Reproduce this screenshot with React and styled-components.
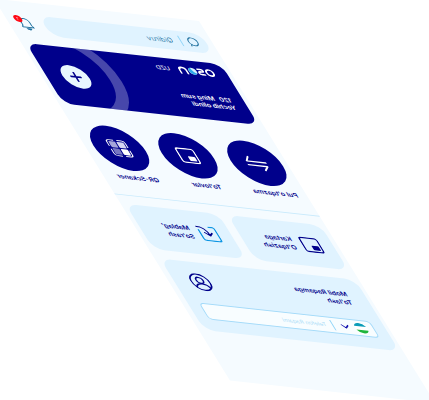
import React from "react";
import styled, { createGlobalStyle } from "styled-components";

const navy = "#00008b";
const ice = "#f5fbff";
const sky = "#e0f3ff";

const GlobalStyle = createGlobalStyle`
  *, *::before, *::after { box-sizing: border-box; }
  body { margin: 0; background: #fff; font-family: Inter, "Liberation Sans", sans-serif; }
  button, input { font: inherit; color: inherit; margin: 0; padding: 0; border: 0; background: none; }
  button { cursor: pointer; }
  svg { display: block; flex: none; }
`;

const Scene = styled.main`
  height: 100vh;
  overflow: hidden;
`;

/* The phone screen lies in space and is seen from behind. */
const Phone = styled.div`
  width: calc(100vw - 54px);
  padding-bottom: 109px;
  background: ${ice};
  color: ${navy};
  transform-origin: 0 0;
  transform: matrix(-0.5467, -0.0596, 0.2906, 0.4704, 199, 21);
`;

const Header = styled.header`
  display: flex;
  align-items: center;
  gap: 22px;
  padding: 28px 21px 0 12px;
`;

const SearchBar = styled.label`
  flex: 1;
  min-width: 0;
  height: 44px;
  padding: 0 14px;
  border-radius: 22px;
  background: ${sky};
  color: #20719f;
  display: flex;
  align-items: center;
`;

const Rule = styled.span`
  width: 2px;
  height: 22px;
  background: #8fd4f8;
  margin: 0 ${(p) => p.$after}px 0 ${(p) => p.$before}px;
  flex: none;
`;

const TextInput = styled.input`
  flex: 1;
  min-width: 0;
  outline: none;
  font-size: ${(p) => p.$size}px;
  &::placeholder { color: ${(p) => p.$tone}; opacity: 1; }
`;

const BellButton = styled.button`
  position: relative;
  width: 24px;
  color: #20719f;
`;

const Badge = styled.span`
  position: absolute;
  top: -3px;
  right: -6px;
  width: 15px;
  height: 15px;
  border-radius: 50%;
  background: #ff0a14;
  color: #fff;
  font-size: 9px;
  line-height: 15px;
  text-align: center;
`;

const BalanceCard = styled.section`
  position: relative;
  overflow: hidden;
  margin: 21px 9px 0;
  padding: 13px 32px 25px 24px;
  border-radius: 20px;
  background: ${navy};
  color: #fff;
  display: flex;
  justify-content: space-between;
  height: 129px;
`;

const Ring = styled.span`
  position: absolute;
  top: -36px;
  right: -59px;
  width: 200px;
  height: 200px;
  border: 21px solid rgba(255, 255, 255, 0.28);
  border-radius: 50%;
`;

const CardInfo = styled.div`
  display: flex;
  flex-direction: column;
  justify-content: space-between;
`;

const Brand = styled.div`
  display: flex;
  align-items: center;
  gap: 16px;
  font-size: 12px;
  line-height: 20px;
`;

const Balance = styled.p`
  margin: 0;
  font-size: 13px;
  font-weight: 600;
  line-height: 16px;
`;

const Amount = styled.span`
  margin-right: 9px;
`;

const PlusButton = styled.button`
  align-self: flex-end;
  width: 50px;
  height: 50px;
  margin-bottom: 14px;
  border-radius: 50%;
  background: #e8f6ff;
  color: ${navy};
  display: grid;
  place-items: center;
`;

const Actions = styled.nav`
  display: flex;
  justify-content: space-between;
  padding: 40px 17px 33px 11px;
  border-bottom: 2px solid #c9eafc;
`;

const Action = styled.button`
  width: 96px;
  display: flex;
  flex-direction: column;
  align-items: center;
  gap: 7px;
  font-size: 13px;
  font-weight: 600;
  line-height: 16px;
  white-space: nowrap;
`;

const Disc = styled.span`
  width: 96px;
  height: 96px;
  border-radius: 50%;
  background: ${navy};
  color: #fff;
  display: grid;
  place-items: center;
`;

const Tiles = styled.div`
  display: grid;
  grid-template-columns: 1fr 1fr;
  gap: 17px;
  padding: 19px 9px 0;
`;

const Tile = styled.button`
  height: 96px;
  padding-left: 24px;
  border-radius: 20px;
  background: ${sky};
  display: flex;
  align-items: center;
  gap: 14px;
  text-align: left;
  font-size: 13px;
  font-weight: 600;
  line-height: 18px;
`;

const Panel = styled.section`
  margin: 20px 11px 0 7px;
  padding: 25px 22px;
  border-radius: 20px;
  background: ${sky};
`;

const PanelHead = styled.div`
  display: flex;
  justify-content: space-between;
  align-items: center;
  padding: 0 10px 0 12px;
  margin-bottom: 28px;
`;

const Title = styled.h2`
  margin: 0;
  font-size: 13px;
  font-weight: 600;
  line-height: 18px;
`;

const PhoneField = styled.div`
  height: 36px;
  padding: 0 11px;
  border: 2px solid #a3daf9;
  border-radius: 8px;
  background: #f8fdff;
  display: flex;
  align-items: center;
`;

const CountryButton = styled.button`
  display: flex;
  align-items: center;
  gap: 10px;
  color: #1616b0;
`;

const SearchIcon = () => (
  <svg width="22" height="22" viewBox="0 0 22 22" fill="none" stroke="currentColor" strokeWidth="2" strokeLinecap="round">
    <circle cx="11" cy="10" r="8.5" />
    <path d="M16.5 16.5l2 3.5" />
  </svg>
);

const BellIcon = () => (
  <svg width="24" height="30" viewBox="0 0 24 30" fill="none" stroke="currentColor" strokeWidth="2" strokeLinecap="round" strokeLinejoin="round">
    <path d="M12 3c-5 0-8 4-8 8v6l-2.5 5h21L20 17v-6c0-4-3-8-8-8z" />
    <path d="M8 25c2 3 6 3 8 0z" fill="currentColor" />
  </svg>
);

const Logo = () => (
  <svg width="66" height="18" viewBox="0 0 66 18" fill="none" stroke="#fff" strokeWidth="3.5" strokeLinecap="round" role="img" aria-label="Oson">
    <ellipse cx="8.5" cy="9" rx="6.5" ry="6.5" />
    <path d="M29 3.5h-5.5c-4.5 0-4.5 5 0 5h2c5 0 5 6 0 6H20" />
    <circle cx="40" cy="9" r="7.5" fill="#d8f2ff" stroke="none" />
    <path d="M34 13.5c4-1 7-4 8-11.5 6 2 7 10 1.5 13.5-3 1.5-7 1-9.5-2z" fill="#2fa8ea" stroke="none" />
    <path d="M51.5 15.5V9c0-8 12.5-8 12.5 0v6.5" />
  </svg>
);

const PlusIcon = () => (
  <svg width="22" height="22" viewBox="0 0 22 22" stroke="currentColor" strokeWidth="3.5" strokeLinecap="round">
    <path d="M11 2v18M2 11h18" />
  </svg>
);

const SwapIcon = () => (
  <svg width="40" height="40" viewBox="0 0 40 40" fill="none" stroke="currentColor" strokeWidth="3" strokeLinecap="round" strokeLinejoin="round">
    <path d="M2 17h35L30 7" />
    <path d="M38 25H3l8 9" />
  </svg>
);

const WalletIcon = () => (
  <svg width="36" height="34" viewBox="0 0 36 34" fill="none" stroke="currentColor" strokeWidth="2.8">
    <rect x="2" y="2" width="32" height="30" rx="4" />
    <rect x="6" y="18" width="13" height="10" rx="1.5" fill="currentColor" stroke="none" />
  </svg>
);

const QrIcon = () => (
  <svg width="40" height="40" viewBox="0 0 40 40" fill="none" stroke="currentColor" strokeWidth="2">
    <rect x="6" y="6" width="13" height="13" rx="2" fill="#d6d6f2" stroke="none" />
    <rect x="21" y="6" width="13" height="13" rx="2" fill="#a6a6da" stroke="none" />
    <rect x="6" y="21" width="13" height="13" rx="2" fill="#fff" stroke="none" />
    <rect x="21" y="21" width="13" height="13" rx="2" fill="#7777c2" stroke="none" />
    <path d="M3 17V8q0-5 5-5h9M23 3h9q5 0 5 5v9M37 23v9q0 5-5 5h-9M17 37H8q-5 0-5-5v-9" />
  </svg>
);

const ReceiveIcon = () => (
  <svg width="36" height="34" viewBox="0 0 36 34" fill="none" strokeWidth="2.8" strokeLinecap="round" strokeLinejoin="round">
    <path d="M12 2H6Q2 2 2 6v22q0 4 4 4h24q4 0 4-4V10" stroke="#0d95e3" />
    <path d="M35 3C25 2 18 8 18 20M12 15l6 6 7-6" stroke={navy} />
  </svg>
);

const UserIcon = () => (
  <svg width="38" height="38" viewBox="0 0 38 38" fill="none" stroke="currentColor" strokeWidth="2.8" strokeLinecap="round">
    <circle cx="19" cy="19" r="17.5" />
    <circle cx="19" cy="15" r="6.5" />
    <path d="M6.5 30.500C10 20 28 20 31.5 30.5" />
  </svg>
);

const FlagIcon = () => (
  <svg width="24" height="24" viewBox="0 0 24 24">
    <circle cx="12" cy="12" r="12" fill="#fff" />
    <path d="M1 8a12 12 0 0 1 22 0z" fill="#0a9cb8" />
    <path d="M1 16a12 12 0 0 0 22 0z" fill="#1fb53c" />
  </svg>
);

const ChevronIcon = () => (
  <svg width="14" height="10" viewBox="0 0 14 10" fill="none" stroke="currentColor" strokeWidth="2.5" strokeLinecap="round">
    <path d="M1 2l6 6 6-6" />
  </svg>
);

const actions = [
  { label: "Pul o'tqazma", icon: <SwapIcon /> },
  { label: "To'lovlar", icon: <WalletIcon /> },
  { label: "QR-Sckaner", icon: <QrIcon /> },
];

export default function App() {
  return (
    <Scene>
      <GlobalStyle />
      <Phone>
        <Header>
          <SearchBar>
            <SearchIcon />
            <Rule $before={11} $after={14} />
            <TextInput type="search" placeholder="Qidiruv" aria-label="Qidiruv" $size={14} $tone="#3b86b0" />
          </SearchBar>
          <BellButton aria-label="Bildirishnomalar">
            <BellIcon />
            <Badge>1</Badge>
          </BellButton>
        </Header>

        <BalanceCard>
          <Ring />
          <CardInfo>
            <Brand>
              <Logo />
              <span>UZD</span>
            </Brand>
            <Balance>
              <Amount>120</Amount>Ming sum
              <br />
              Yechib olindi
            </Balance>
          </CardInfo>
          <PlusButton aria-label="Qo'shish">
            <PlusIcon />
          </PlusButton>
        </BalanceCard>

        <Actions>
          {actions.map((a) => (
            <Action key={a.label}>
              <Disc>{a.icon}</Disc>
              {a.label}
            </Action>
          ))}
        </Actions>

        <Tiles>
          <Tile>
            <WalletIcon />
            <span>
              Kartaga
              <br />
              O'tqazish
            </span>
          </Tile>
          <Tile>
            <ReceiveIcon />
            <span>
              Mablag'
              <br />
              So'rash
            </span>
          </Tile>
        </Tiles>

        <Panel>
          <PanelHead>
            <Title>
              Mobil Raqamga
              <br />
              To'lash
            </Title>
            <UserIcon />
          </PanelHead>
          <PhoneField>
            <CountryButton aria-label="Davlat kodi">
              <FlagIcon />
              <ChevronIcon />
            </CountryButton>
            <Rule $before={15} $after={11} />
            <TextInput type="tel" placeholder="Telefon Raqami" aria-label="Telefon Raqami" $size={11} $tone="#a9dcf7" />
          </PhoneField>
        </Panel>
      </Phone>
    </Scene>
  );
}
